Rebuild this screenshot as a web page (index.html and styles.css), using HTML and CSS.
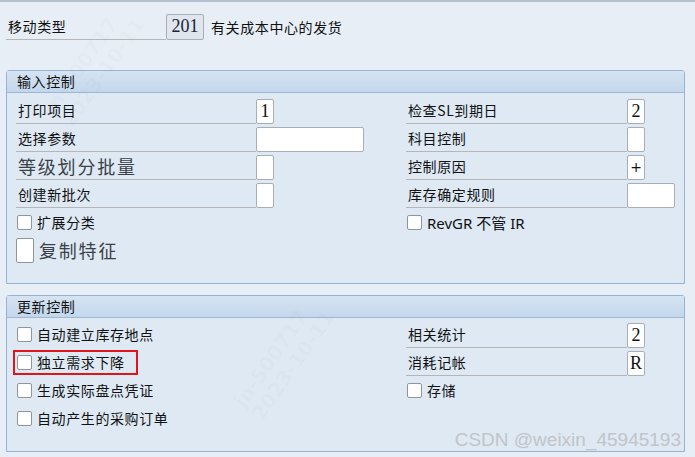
FILE: index.html
```html
<!DOCTYPE html>
<html lang="zh">
<head>
<meta charset="UTF-8">
<link rel="stylesheet" href="styles.css">
<title>移动类型 201</title>
</head>
<body>
<div class="screen">
    <div class="top-row">
        <div class="label top-label">移动类型</div>
        <div class="field field-ro">201</div>
        <div class="top-desc">有关成本中心的发货</div>
    </div>

    <section class="group group-input">
        <div class="group-head">输入控制</div>
        <div class="group-body">
            <div class="col col-left">
                <div class="row"><div class="label">打印项目</div><div class="field w1">1</div></div>
                <div class="row"><div class="label">选择参数</div><div class="field w6"></div></div>
                <div class="row"><div class="label big">等级划分批量</div><div class="field w1"></div></div>
                <div class="row"><div class="label">创建新批次</div><div class="field w1"></div></div>
                <div class="row check-row"><span class="box"></span><span class="check-text">扩展分类</span></div>
                <div class="row check-row"><span class="box box-big"></span><span class="check-text big">复制特征</span></div>
            </div>
            <div class="col col-right">
                <div class="row"><div class="label">检查SL到期日</div><div class="field w1">2</div></div>
                <div class="row"><div class="label">科目控制</div><div class="field w1"></div></div>
                <div class="row"><div class="label">控制原因</div><div class="field w1 plus">+</div></div>
                <div class="row"><div class="label">库存确定规则</div><div class="field w3"></div></div>
                <div class="row check-row"><span class="box"></span><span class="check-text latin">RevGR 不管 IR</span></div>
            </div>
        </div>
    </section>

    <section class="group group-update">
        <div class="group-head">更新控制</div>
        <div class="group-body">
            <div class="col col-left">
                <div class="row check-row"><span class="box"></span><span class="check-text">自动建立库存地点</span></div>
                <div class="row check-row"><span class="marked"><span class="box"></span><span class="check-text">独立需求下降</span></span></div>
                <div class="row check-row"><span class="box"></span><span class="check-text">生成实际盘点凭证</span></div>
                <div class="row check-row"><span class="box"></span><span class="check-text">自动产生的采购订单</span></div>
            </div>
            <div class="col col-right">
                <div class="row"><div class="label">相关统计</div><div class="field w1">2</div></div>
                <div class="row"><div class="label">消耗记帐</div><div class="field w1">R</div></div>
                <div class="row check-row"><span class="box"></span><span class="check-text">存储</span></div>
            </div>
        </div>
    </section>

    <div class="stamp stamp-top">jn-500717<br>2023-10-11</div>
    <div class="stamp stamp-bottom">jn-500717<br>2023-10-11</div>
    <div class="csdn">CSDN @weixin_45945193</div>
</div>
</body>
</html>
```

FILE: styles.css
```css
body {
    margin: 0;
    background: #e8eef6;
    font-family: "Noto Sans CJK SC", "Noto Sans", sans-serif;
    font-size: 14px;
    color: #111;
}

.screen {
    position: relative;
    width: 695px;
    height: 457px;
    overflow: hidden;
    border-top: 2px solid #b3c0d0;
    box-sizing: border-box;
}

/* top line: movement type */
.top-row {
    display: flex;
    align-items: flex-end;
    height: 26px;
    margin-top: 12px;
    padding-left: 6px;
}

.label {
    height: 27px;
    line-height: 27px;
    border-bottom: 1px solid #b6b6b6;
    box-sizing: border-box;
    padding-left: 2px;
    white-space: nowrap;
    letter-spacing: 0.6px;
}

.top-label {
    width: 160px;
    height: 26px;
    line-height: 24px;
}

.field {
    height: 25px;
    box-sizing: border-box;
    border: 1px solid #a9aeb5;
    border-radius: 2px;
    background: #fff;
    font-family: "Liberation Serif", serif;
    font-size: 18px;
    line-height: 23px;
    text-align: center;
}

.field-ro {
    width: 38px;
    height: 26px;
    background: #dfe6ee;
    color: #1a2438;
}

.top-desc {
    margin-left: 7px;
    line-height: 26px;
    letter-spacing: 0.6px;
}

.w1 { width: 18px; }
.w3 { width: 48px; }
.w6 { width: 108px; }

.plus {
    font-family: "DejaVu Sans", sans-serif;
    font-size: 14px;
}

/* group boxes */
.group {
    margin: 0 10px 0 6px;
    border: 1px solid #95b3d4;
    border-radius: 3px 3px 0 0;
    background: #dee9f4;
}

.group-input { margin-top: 30px; }
.group-update { margin-top: 11px; }

.group-head {
    height: 21px;
    line-height: 21px;
    padding-left: 10px;
    border-bottom: 1px solid #9cb8d6;
    background: linear-gradient(#d6e4f2, #c3d7ec);
    letter-spacing: 0.6px;
}

.group-body {
    display: grid;
    grid-template-columns: 390px 1fr;
    padding: 3px 0 19px 9px;
}

.group-update .group-body { padding-top: 2px; }

.row {
    display: flex;
    align-items: flex-end;
    height: 28px;
}

.col-left .label { width: 240px; }
.col-right .label { width: 221px; }

.label.big,
.check-text.big {
    font-size: 18px;
    letter-spacing: 1.8px;
    color: #3b3f46;
}

/* checkboxes */
.check-row {
    align-items: center;
    padding-left: 1px;
}

.box {
    width: 15px;
    height: 15px;
    box-sizing: border-box;
    border: 1px solid #8f959c;
    border-radius: 2px;
    background: #fff;
    flex: none;
}

.box-big {
    width: 18px;
    height: 25px;
    margin-left: -1px;
}

.check-text {
    margin-left: 5px;
    letter-spacing: 0.6px;
    white-space: nowrap;
}

.latin {
    font-family: "Noto Sans", "Noto Sans CJK SC", sans-serif;
    font-size: 15px;
    letter-spacing: 0;
}

.marked {
    display: flex;
    align-items: center;
    width: 125px;
    height: 25px;
    box-sizing: border-box;
    margin-left: -4px;
    padding-left: 2px;
    border: 2px solid #e2141b;
}

/* watermarks */
.stamp {
    position: absolute;
    font-family: "DejaVu Sans", sans-serif;
    font-size: 20px;
    font-weight: bold;
    line-height: 22px;
    color: rgba(120, 120, 120, 0.035);
    transform: rotate(-55deg);
    white-space: nowrap;
}

.stamp-top { left: 30px; top: 42px; }
.stamp-bottom { left: 220px; top: 335px; }

.csdn {
    position: absolute;
    right: 14px;
    bottom: 6px;
    font-family: "Liberation Sans", sans-serif;
    font-size: 19px;
    color: #c2c4c8;
}
```
